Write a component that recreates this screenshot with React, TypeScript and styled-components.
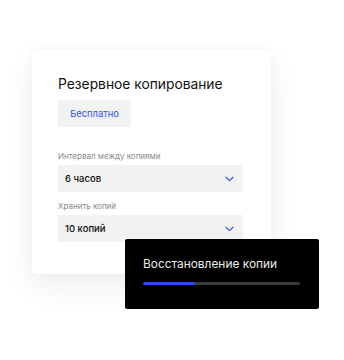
import React from 'react';
import styled, { createGlobalStyle } from "styled-components";

const Global = createGlobalStyle`
  body {
    margin: 0;
    background: #ffffff;
    font-family: Inter, "Noto Sans", sans-serif;
  }
`

function Chevron() {
    return (
        <svg width="9" height="6" viewBox="0 0 9 6" fill="none">
            <path d="M1 1.2 L4.5 4.6 L8 1.2" stroke="#3b5cf0" strokeWidth="1.3" strokeLinecap="round" strokeLinejoin="round"/>
        </svg>
    );
}

function App() {
    const progress = 33;
    return (
        <Page>
            <Global/>
            <Scene>
                <Card>
                    <Title>Резервное копирование</Title>
                    <PlanButton>Бесплатно</PlanButton>
                    <Field>
                        <Label>Интервал между копиями</Label>
                        <Select>
                            <span>6 часов</span>
                            <Chevron/>
                        </Select>
                    </Field>
                    <Field>
                        <Label>Хранить копий</Label>
                        <Select>
                            <span>10 копий</span>
                            <Chevron/>
                        </Select>
                    </Field>
                </Card>
                <Toast>
                    <ToastTitle>Восстановление копии</ToastTitle>
                    <Track>
                        <Fill style={{width: `${progress}%`}}/>
                    </Track>
                </Toast>
            </Scene>
        </Page>
    );
}

export default App;

const Page = styled.div`
  width: 344px;
  height: 360px;
  overflow: hidden;
`

const Scene = styled.div`
  position: relative;
  padding: 50px 0 0 32px;
`

const Card = styled.div`
  width: 239px;
  height: 224px;
  box-sizing: border-box;
  padding: 24px 28px 0 26px;
  background: #ffffff;
  border-radius: 5px;
  box-shadow: 0 12px 30px rgba(0, 0, 0, 0.07), 0 0 12px rgba(0, 0, 0, 0.03);
  display: flex;
  flex-direction: column;
`

const Title = styled.div`
  font-size: 13.8px;
  line-height: 20px;
  color: #111111;
`

const PlanButton = styled.div`
  margin-top: 6px;
  width: 73px;
  height: 27px;
  background: #f2f2f2;
  color: #2f55ea;
  font-size: 9.4px;
  display: flex;
  align-items: center;
  justify-content: center;
  border-radius: 1px;
`

const Field = styled.div`
  margin-top: 24px;
  display: flex;
  flex-direction: column;
  & + & {
    margin-top: 9px;
  }
`

const Label = styled.div`
  font-size: 8px;
  line-height: 10px;
  color: #8a8a8a;
  margin-bottom: 4px;
`

const Select = styled.div`
  height: 27px;
  background: #f2f2f2;
  display: flex;
  align-items: center;
  justify-content: space-between;
  padding: 0 9px 0 7px;
  font-size: 9.5px;
  font-weight: 500;
  color: #111111;
`

const Toast = styled.div`
  position: absolute;
  left: 125px;
  top: 239px;
  width: 194px;
  height: 70px;
  box-sizing: border-box;
  padding: 17px 19px 0 18px;
  background: #000000;
  border-radius: 2px;
`

const ToastTitle = styled.div`
  font-size: 11.9px;
  line-height: 16px;
  color: #ececec;
`

const Track = styled.div`
  margin-top: 10px;
  height: 3px;
  background: #3a3a3a;
  border-radius: 2px;
  overflow: hidden;
`

const Fill = styled.div`
  height: 100%;
  background: #2a4cf5;
  border-radius: 2px;
`
